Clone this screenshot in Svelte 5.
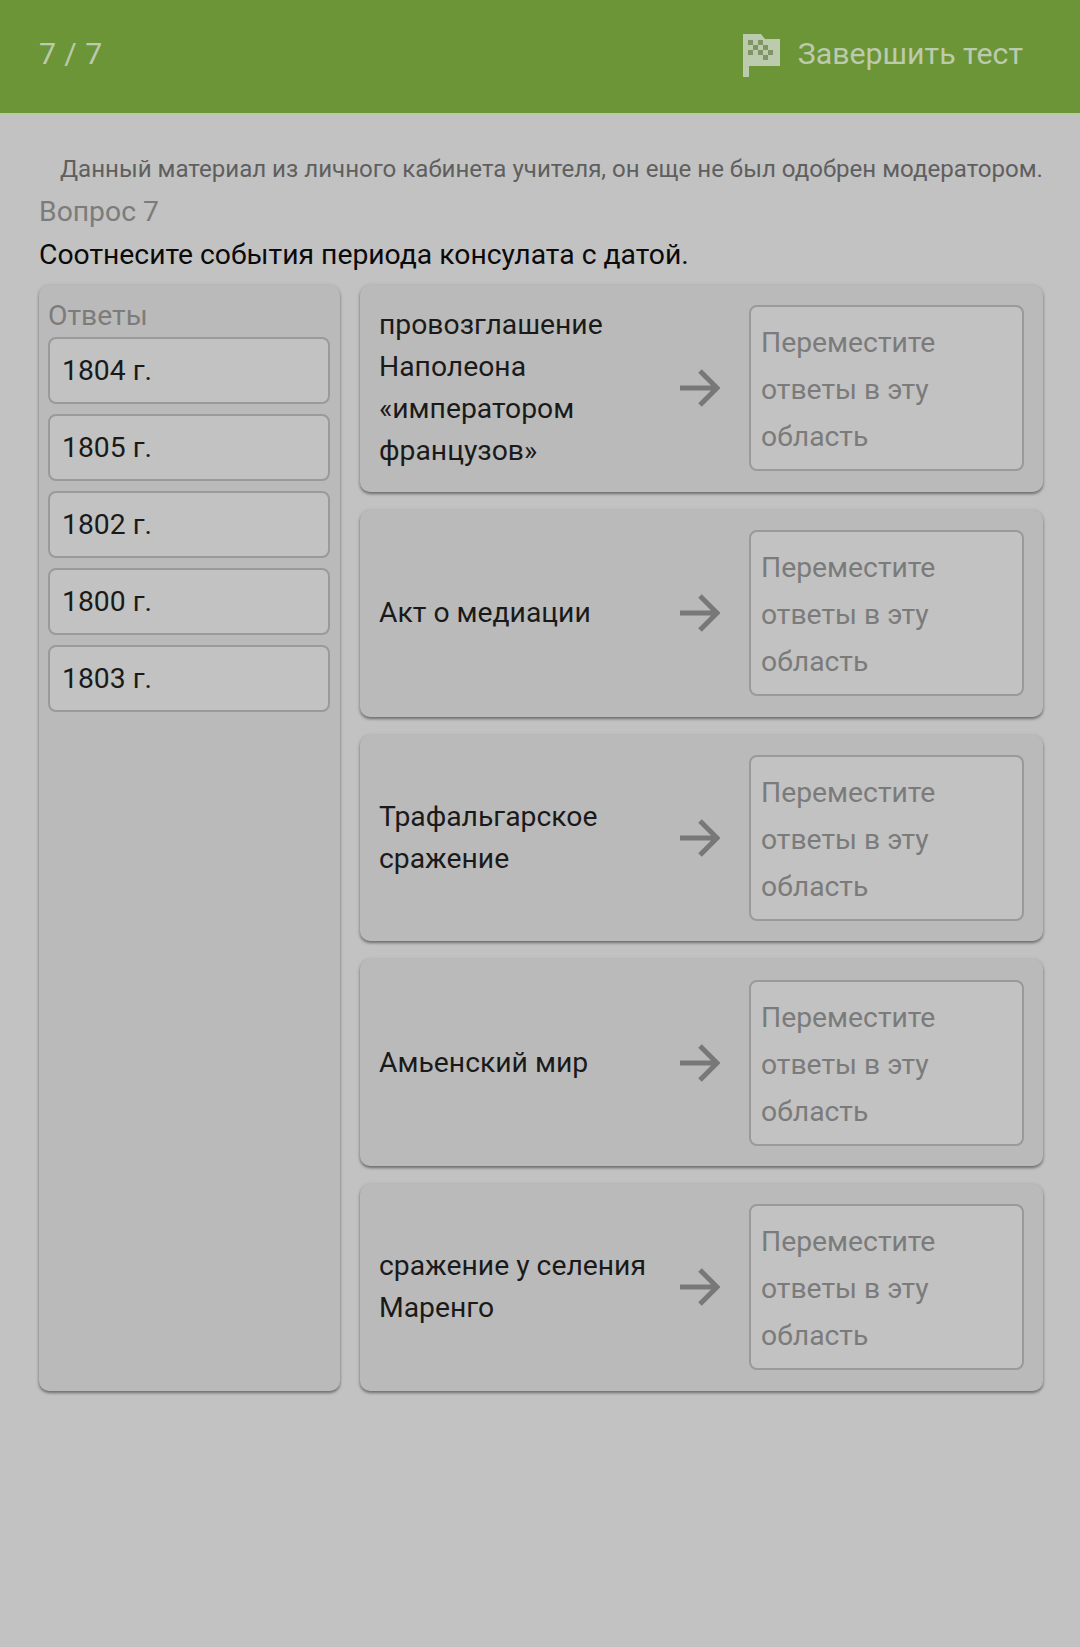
<script>
    // Match the events with dates: left column holds answers, right column the drop zones
    const answers = ["1804 г.", "1805 г.", "1802 г.", "1800 г.", "1803 г."];
    const events = [
        ["провозглашение", "Наполеона", "«императором", "французов»"],
        ["Акт о медиации"],
        ["Трафальгарское", "сражение"],
        ["Амьенский мир"],
        ["сражение у селения", "Маренго"]
    ];

    // Dark squares on the checkered flag, as [column, row]
    const checks = [[0, 0], [2, 0], [1, 1], [3, 1], [0, 2], [2, 2], [4, 2], [3, 3]];
</script>

<header class="topbar">
    <span class="counter">7 / 7</span>
    <div class="finish">
        <svg class="flag" width="37" height="43" viewBox="0 0 37 43">
            <path d="M0 0h18l4 5h15v27H6v11H0z" fill="#bccaae" />
            {#each checks as [cx, cy]}
                <rect x={5 + cx * 5} y={6 + cy * 5} width="5" height="5" fill="#7f9565" />
            {/each}
        </svg>
        <span>Завершить тест</span>
    </div>
</header>

<main class="content">
    <p class="notice">Данный материал из личного кабинета учителя, он еще не был одобрен модератором.</p>
    <h2 class="number">Вопрос 7</h2>
    <p class="question">Соотнесите события периода консулата с датой.</p>

    <div class="board">
        <section class="answers">
            <h3>Ответы</h3>
            <div class="list">
                {#each answers as answer}
                    <div class="answer">{answer}</div>
                {/each}
            </div>
        </section>

        <div class="rows">
            {#each events as lines}
                <section class="row">
                    <div class="event">
                        {#each lines as line}
                            <div>{line}</div>
                        {/each}
                    </div>
                    <svg class="arrow" width="40" height="38" viewBox="0 0 40 38">
                        <path d="M0 19h37M20 2l17 17-17 17" fill="none" stroke="#787878" stroke-width="5" />
                    </svg>
                    <div class="drop">Переместите ответы в эту область</div>
                </section>
            {/each}
        </div>
    </div>
</main>

<style>
    :global(body) {
        background: #c2c2c2;
        font-family: Roboto, "Noto Sans", sans-serif;
    }

    .topbar {
        height: 106px;
        background: #6c9537;
        border-bottom: 2px solid #b9cba6;
        display: flex;
        align-items: center;
        justify-content: space-between;
        padding: 0 57px 7px 39px;
        color: #bccaae;
        font-size: 30.3px;
    }

    .counter {
        letter-spacing: 0.4px;
    }

    .finish {
        display: flex;
        align-items: center;
        gap: 18px;
    }

    .flag {
        margin-top: 4px;
    }

    .content {
        padding: 38px 37px 80px 39px;
    }

    .notice {
        margin: 0;
        padding-left: 21px;
        font-size: 24.08px;
        line-height: 32px;
        color: #5f5f5f;
        white-space: nowrap;
    }

    .number {
        margin: 8px 0 0;
        font-size: 28.3px;
        font-weight: 400;
        line-height: 38px;
        color: #7c7c7c;
    }

    .question {
        margin: 5px 0 0;
        font-size: 28.3px;
        line-height: 38px;
        color: #0a0a0a;
    }

    .board {
        display: flex;
        gap: 20px;
        margin-top: 11px;
    }

    .answers,
    .row {
        background: #bababa;
        border-radius: 10px;
        box-shadow: 0 2px 3px #6e6e6e, 0 0 4px rgba(0, 0, 0, 0.08);
    }

    .answers {
        width: 301px;
        flex: none;
        box-sizing: border-box;
        padding: 15px 10px 16px 9px;
    }

    h3 {
        margin: 0;
        font-size: 28.3px;
        font-weight: 400;
        line-height: 32px;
        color: #7c7c7c;
    }

    .list {
        display: flex;
        flex-direction: column;
        gap: 10px;
        margin-top: 5px;
    }

    .answer {
        height: 67px;
        box-sizing: border-box;
        border: 2px solid #9a9a9a;
        border-radius: 8px;
        background: #c2c2c2;
        padding-left: 12px;
        display: flex;
        align-items: center;
        font-size: 28.3px;
        color: #1a1a1a;
    }

    .rows {
        flex: 1;
        display: flex;
        flex-direction: column;
        gap: 18px;
    }

    .row {
        height: 206.75px;
        box-sizing: border-box;
        padding: 20px 19px;
        display: flex;
        align-items: center;
    }

    .event {
        width: 321px;
        flex: none;
        font-size: 28.3px;
        line-height: 42px;
        color: #1a1a1a;
    }

    .arrow {
        flex: none;
        margin: 0 29px 0 -20px;
    }

    .drop {
        flex: 1;
        height: 166px;
        box-sizing: border-box;
        border: 2px solid #9a9a9a;
        border-radius: 8px;
        background: #c2c2c2;
        padding: 12px 10px;
        font-size: 28.3px;
        line-height: 47px;
        color: #7b7b7b;
    }
</style>
